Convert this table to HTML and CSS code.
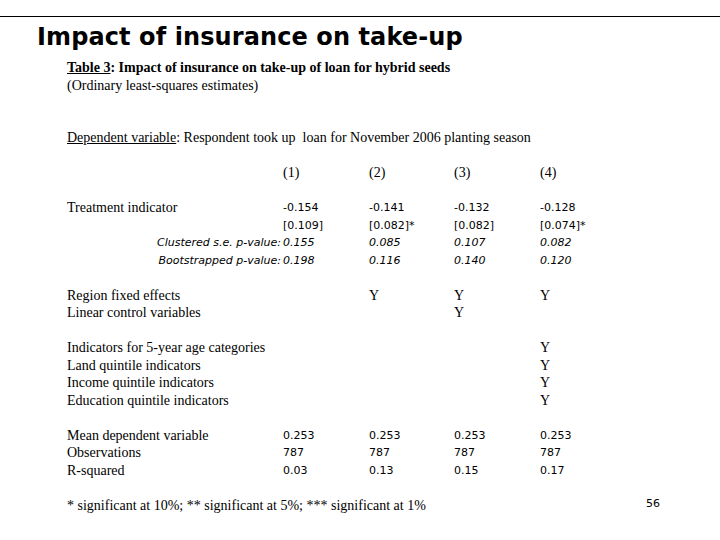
FILE: index.html
```html
<!DOCTYPE html>
<html lang="en">
<head>
<meta charset="utf-8">
<title>Impact of insurance on take-up</title>
<link rel="stylesheet" href="styles.css">
</head>
<body>
<main class="slide">
  <div class="rule"></div>
  <h1 class="title">Impact of insurance on take-up</h1>
  <section class="block">
    <p class="line caption"><u>Table 3</u>: Impact of insurance on take-up of loan for hybrid seeds</p>
    <p class="line">(Ordinary least-squares estimates)</p>
    <p class="line dep"><u>Dependent variable</u>: Respondent took up&nbsp; loan for November 2006 planting season</p>

    <div class="grid heads">
      <span></span><span>(1)</span><span>(2)</span><span>(3)</span><span>(4)</span>
    </div>

    <div class="grid group">
      <span>Treatment indicator</span><span class="num">-0.154</span><span class="num">-0.141</span><span class="num">-0.132</span><span class="num">-0.128</span>
      <span></span><span class="num">[0.109]</span><span class="num">[0.082]*</span><span class="num">[0.082]</span><span class="num">[0.074]*</span>
      <span class="it right">Clustered s.e. p-value:</span><span class="it">0.155</span><span class="it">0.085</span><span class="it">0.107</span><span class="it">0.082</span>
      <span class="it right">Bootstrapped p-value:</span><span class="it">0.198</span><span class="it">0.116</span><span class="it">0.140</span><span class="it">0.120</span>
    </div>

    <div class="grid group">
      <span>Region fixed effects</span><span></span><span>Y</span><span>Y</span><span>Y</span>
      <span>Linear control variables</span><span></span><span></span><span>Y</span><span></span>
    </div>

    <div class="grid group">
      <span>Indicators for 5-year age categories</span><span></span><span></span><span></span><span>Y</span>
      <span>Land quintile indicators</span><span></span><span></span><span></span><span>Y</span>
      <span>Income quintile indicators</span><span></span><span></span><span></span><span>Y</span>
      <span>Education quintile indicators</span><span></span><span></span><span></span><span>Y</span>
    </div>

    <div class="grid group">
      <span>Mean dependent variable</span><span class="num">0.253</span><span class="num">0.253</span><span class="num">0.253</span><span class="num">0.253</span>
      <span>Observations</span><span class="num">787</span><span class="num">787</span><span class="num">787</span><span class="num">787</span>
      <span>R-squared</span><span class="num">0.03</span><span class="num">0.13</span><span class="num">0.15</span><span class="num">0.17</span>
    </div>

    <div class="footer">
      <p class="line">* significant at 10%; ** significant at 5%; *** significant at 1%</p>
      <span class="page">56</span>
    </div>
  </section>
</main>
</body>
</html>
```

FILE: styles.css
```css
html, body {
  margin: 0;
  padding: 0;
  background: #ffffff;
}

.slide {
  width: 720px;
  height: 540px;
  padding-top: 16px;
  box-sizing: border-box;
  color: #000;
  font-family: "Liberation Serif", "Times New Roman", serif;
  font-size: 14px;
}

.rule {
  height: 0;
  border-top: 1.5px solid #000;
}

.title {
  margin: 5px 0 0 37px;
  font-family: "DejaVu Sans", Verdana, sans-serif;
  font-weight: bold;
  font-size: 24px;
  line-height: 30px;
  letter-spacing: 0.1px;
}

.block {
  margin: 7px 0 0 67px;
  line-height: 17.5px;
}

.line {
  margin: 0;
  white-space: nowrap;
}

.caption {
  font-weight: bold;
}

.dep {
  margin-top: 35px;
}

.grid {
  display: grid;
  grid-template-columns: 216px 86px 85px 86px 1fr;
  grid-auto-rows: 17.5px;
  white-space: nowrap;
}

.heads {
  margin-top: 17.5px;
}

.group {
  margin-top: 17.5px;
}

.num {
  font-family: "DejaVu Sans", Verdana, sans-serif;
  font-size: 11px;
}

.it {
  font-family: "DejaVu Sans", Verdana, sans-serif;
  font-size: 11px;
  font-style: italic;
}

.right {
  text-align: right;
  padding-right: 2px;
}

.footer {
  display: flex;
  align-items: center;
  margin-top: 17.5px;
  padding-right: 60px;
}

.page {
  margin-left: auto;
  margin-top: -4px;
  font-family: "DejaVu Sans", Verdana, sans-serif;
  font-size: 11px;
}
```
